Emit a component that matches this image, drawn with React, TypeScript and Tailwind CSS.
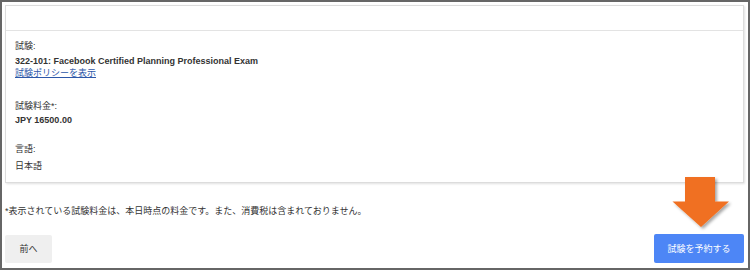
const font = { fontFamily: '"Liberation Sans", "Noto Sans CJK JP", sans-serif' };

export default function App() {
  return (
    <div
      className="relative w-[750px] h-[270px] box-border border-2 border-[#666666] bg-white pt-[3px] pl-[3px] pr-[4px] text-[9px] leading-[12px] text-[#333333]"
      style={font}
    >
      <div className="h-[178px] border border-[#dcdcdc] bg-white shadow-[1px_1px_2px_rgba(0,0,0,0.12)]">
        <div className="h-[25px] border-b border-[#e3e3e3]" />
        <div className="pl-[9px] pt-[9px]">
          <div>
            <p>試験:</p>
            <p className="mt-[3px] font-bold">322-101: Facebook Certified Planning Professional Exam</p>
            <a className="block text-[#2d57a8] underline">試験ポリシーを表示</a>
          </div>
          <div className="mt-[21px]">
            <p>試験料金*:</p>
            <p className="mt-[2px] font-bold">JPY 16500.00</p>
          </div>
          <div className="mt-[17px]">
            <p>言語:</p>
            <p className="mt-[5px]">日本語</p>
          </div>
        </div>
      </div>

      <p className="mt-[22px]">*表示されている試験料金は、本日時点の料金です。また、消費税は含まれておりません。</p>

      <div className="mt-[17px] flex items-center justify-between">
        <button className="h-[28px] w-[47px] rounded-[2px] bg-[#efefef] text-[#333333]">前へ</button>
        <button className="h-[29px] w-[90px] rounded-[2px] bg-[#4d86f6] text-white">試験を予約する</button>
      </div>

      <svg
        className="absolute left-[666px] top-[171px]"
        width="68"
        height="60"
        viewBox="0 0 68 60"
      >
        <defs>
          <filter id="sh" x="-20%" y="-20%" width="150%" height="150%">
            <feDropShadow dx="2" dy="2" stdDeviation="1.5" floodColor="#000" floodOpacity="0.35" />
          </filter>
        </defs>
        <path d="M17 4 H47 V28.5 H61 L33 54 L4.5 28.5 H17 Z" fill="#f07021" filter="url(#sh)" />
      </svg>
    </div>
  );
}
